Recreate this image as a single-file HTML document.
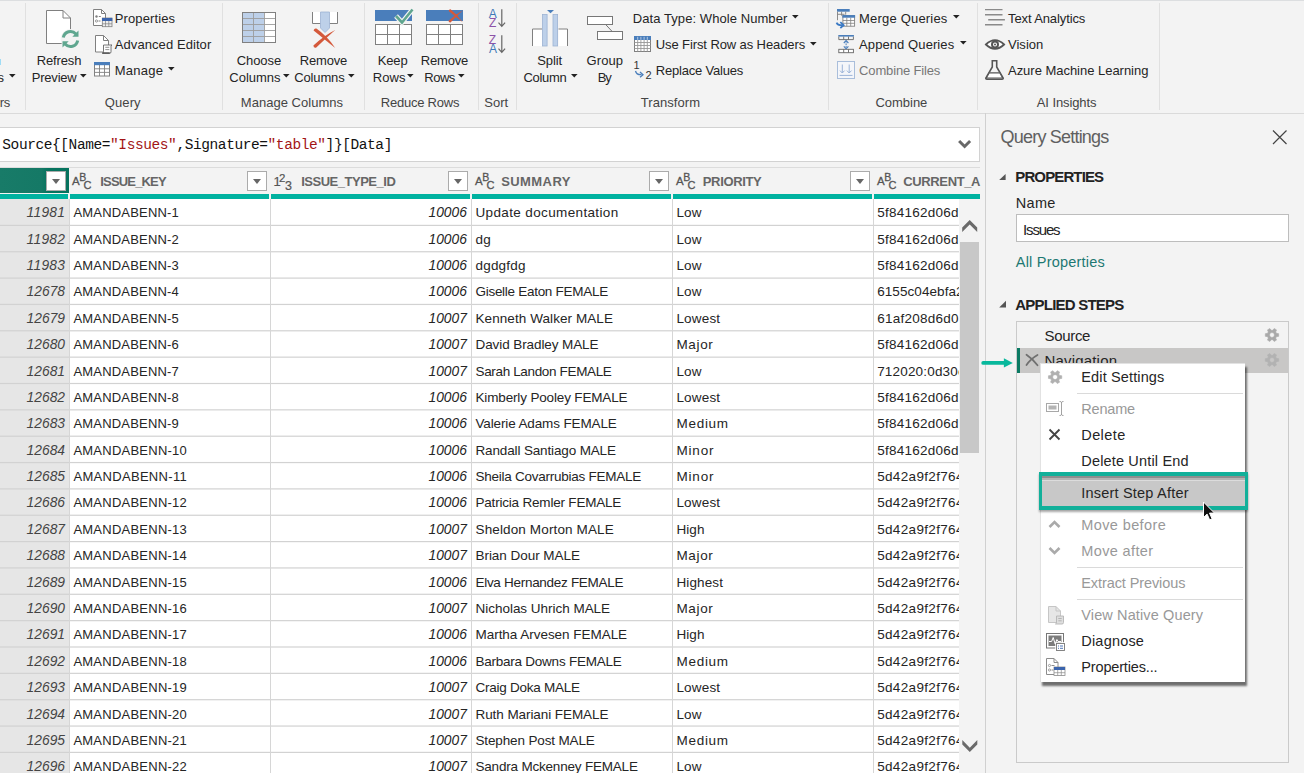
<!DOCTYPE html>
<html><head><meta charset="utf-8"><title>Power Query Editor</title>
<style>
html,body{margin:0;padding:0;}
body{width:1304px;height:773px;overflow:hidden;background:#f3f3f3;position:relative;
 font-family:"Liberation Sans",sans-serif;color:#252525;}
.a{position:absolute;}
.t{position:absolute;white-space:pre;line-height:20px;height:20px;}
.m{font-family:"Liberation Mono",monospace;}
.b{font-weight:bold;}
.i{font-style:italic;}
svg{position:absolute;overflow:visible;}
.sep{position:absolute;width:1px;background:#e0e0e0;top:3px;height:107px;}
.dd{position:absolute;width:18px;height:18px;border:1px solid #ababab;background:#fff;top:171px;}
.dd:after{content:"";position:absolute;left:5px;top:7px;border-left:4.5px solid transparent;border-right:4.5px solid transparent;border-top:5px solid #666;}
.hl{position:absolute;height:1px;background:#d6d6d6;left:0;}
.vl{position:absolute;width:1px;background:#d6d6d6;}
.msep{position:absolute;height:1px;background:#dadada;left:1077px;width:166px;}
</style></head>
<body>
<div class="a" style="left:0;top:0;width:1304px;height:1px;background:#dcdee0"></div>
<div class="a" style="left:0;top:59px;width:1px;height:6px;background:#9fdcf5"></div>
<div class="a" style="left:0;top:113px;width:1304px;height:1px;background:#dadada"></div>
<div class="sep" style="left:25px"></div>
<div class="sep" style="left:222px"></div>
<div class="sep" style="left:364px"></div>
<div class="sep" style="left:478px"></div>
<div class="sep" style="left:516px"></div>
<div class="sep" style="left:828px"></div>
<div class="sep" style="left:977px"></div>
<div class="sep" style="left:1159px"></div>
<div class="a" style="left:-2px;top:127px;width:980px;height:33px;background:#fff;border:1px solid #d2d2d2"></div>
<div class="a" style="left:985px;top:113px;width:1px;height:660px;background:#d0d0d0"></div>
<div class="a" style="left:69px;top:199px;width:890px;height:574px;background:#fff"></div>
<div class="a" style="left:0;top:199px;width:69px;height:574px;background:#e6e6e6"></div>
<div class="a" style="left:0;top:167px;width:980px;height:1px;background:#dcdcdc"></div>
<div class="a" style="left:0;top:168px;width:980px;height:26px;background:#f3f3f3"></div>
<div class="a" style="left:0;top:168px;width:69px;height:25px;background:linear-gradient(90deg,#187b68 0,#157966 60%,#06735e 70%,#06735e 100%)"></div>
<div class="a" style="left:0;top:194px;width:980px;height:5px;background:#00b2a0"></div>
<div class="vl" style="left:69px;top:168px;height:26px;width:1px;background:#f3f3f3"></div>
<div class="vl" style="left:68px;top:193px;height:6px;width:2px;background:#f3f3f3"></div>
<div class="vl" style="left:270px;top:168px;height:26px;width:1px;background:#f3f3f3"></div>
<div class="vl" style="left:269px;top:193px;height:6px;width:2px;background:#f3f3f3"></div>
<div class="vl" style="left:471px;top:168px;height:26px;width:1px;background:#f3f3f3"></div>
<div class="vl" style="left:470px;top:193px;height:6px;width:2px;background:#f3f3f3"></div>
<div class="vl" style="left:672px;top:168px;height:26px;width:1px;background:#f3f3f3"></div>
<div class="vl" style="left:671px;top:193px;height:6px;width:2px;background:#f3f3f3"></div>
<div class="vl" style="left:873px;top:168px;height:26px;width:1px;background:#f3f3f3"></div>
<div class="vl" style="left:872px;top:193px;height:6px;width:2px;background:#f3f3f3"></div>
<svg style="left:0;top:0" width="959" height="773" viewBox="0 0 959 773"><rect x="0" y="224.80" width="959" height="1.2" fill="#d2d2d2"/><rect x="0" y="251.15" width="959" height="1.2" fill="#d2d2d2"/><rect x="0" y="277.50" width="959" height="1.2" fill="#d2d2d2"/><rect x="0" y="303.85" width="959" height="1.2" fill="#d2d2d2"/><rect x="0" y="330.20" width="959" height="1.2" fill="#d2d2d2"/><rect x="0" y="356.55" width="959" height="1.2" fill="#d2d2d2"/><rect x="0" y="382.90" width="959" height="1.2" fill="#d2d2d2"/><rect x="0" y="409.25" width="959" height="1.2" fill="#d2d2d2"/><rect x="0" y="435.60" width="959" height="1.2" fill="#d2d2d2"/><rect x="0" y="461.95" width="959" height="1.2" fill="#d2d2d2"/><rect x="0" y="488.30" width="959" height="1.2" fill="#d2d2d2"/><rect x="0" y="514.65" width="959" height="1.2" fill="#d2d2d2"/><rect x="0" y="541.00" width="959" height="1.2" fill="#d2d2d2"/><rect x="0" y="567.35" width="959" height="1.2" fill="#d2d2d2"/><rect x="0" y="593.70" width="959" height="1.2" fill="#d2d2d2"/><rect x="0" y="620.05" width="959" height="1.2" fill="#d2d2d2"/><rect x="0" y="646.40" width="959" height="1.2" fill="#d2d2d2"/><rect x="0" y="672.75" width="959" height="1.2" fill="#d2d2d2"/><rect x="0" y="699.10" width="959" height="1.2" fill="#d2d2d2"/><rect x="0" y="725.45" width="959" height="1.2" fill="#d2d2d2"/><rect x="0" y="751.80" width="959" height="1.2" fill="#d2d2d2"/></svg>
<div class="vl" style="left:69px;top:199px;height:574px"></div>
<div class="vl" style="left:270px;top:199px;height:574px"></div>
<div class="vl" style="left:471px;top:199px;height:574px"></div>
<div class="vl" style="left:672px;top:199px;height:574px"></div>
<div class="vl" style="left:873px;top:199px;height:574px"></div>
<div class="dd" style="left:46px"></div>
<div class="dd" style="left:247px"></div>
<div class="dd" style="left:448px"></div>
<div class="dd" style="left:649px"></div>
<div class="dd" style="left:850px"></div>
<div class="a" style="left:960px;top:242px;width:19px;height:211px;background:#c8c8c8"></div>
<div class="a" style="left:1016px;top:214px;width:271px;height:26px;background:#fff;border:1px solid #bdbdbd"></div>
<div class="a" style="left:1016px;top:321px;width:271px;height:440px;border:1px solid #cacaca"></div>
<div class="a" style="left:1017px;top:348px;width:271px;height:25px;background:#c8c7c6"></div>
<div class="a" style="left:1017px;top:348px;width:3px;height:25px;background:#0b7a63"></div>
<svg style="left:8.8px;top:73.8px" width="7" height="4" viewBox="0 0 7 4"><path d="M0 0h6.6L3.3 3.6z" fill="#222"/></svg>
<svg style="left:79.7px;top:73.8px" width="7" height="4" viewBox="0 0 7 4"><path d="M0 0h6.6L3.3 3.6z" fill="#222"/></svg>
<svg style="left:167.7px;top:66.89999999999999px" width="7" height="4" viewBox="0 0 7 4"><path d="M0 0h6.6L3.3 3.6z" fill="#222"/></svg>
<svg style="left:282.7px;top:73.8px" width="7" height="4" viewBox="0 0 7 4"><path d="M0 0h6.6L3.3 3.6z" fill="#222"/></svg>
<svg style="left:347.7px;top:73.8px" width="7" height="4" viewBox="0 0 7 4"><path d="M0 0h6.6L3.3 3.6z" fill="#222"/></svg>
<svg style="left:407.2px;top:73.8px" width="7" height="4" viewBox="0 0 7 4"><path d="M0 0h6.6L3.3 3.6z" fill="#222"/></svg>
<svg style="left:458.4px;top:73.8px" width="7" height="4" viewBox="0 0 7 4"><path d="M0 0h6.6L3.3 3.6z" fill="#222"/></svg>
<svg style="left:570.7px;top:73.8px" width="7" height="4" viewBox="0 0 7 4"><path d="M0 0h6.6L3.3 3.6z" fill="#222"/></svg>
<svg style="left:791.7px;top:15.1px" width="7" height="4" viewBox="0 0 7 4"><path d="M0 0h6.6L3.3 3.6z" fill="#222"/></svg>
<svg style="left:810.4000000000001px;top:41.5px" width="7" height="4" viewBox="0 0 7 4"><path d="M0 0h6.6L3.3 3.6z" fill="#222"/></svg>
<svg style="left:952.7px;top:15.299999999999999px" width="7" height="4" viewBox="0 0 7 4"><path d="M0 0h6.6L3.3 3.6z" fill="#222"/></svg>
<svg style="left:959.7px;top:41.4px" width="7" height="4" viewBox="0 0 7 4"><path d="M0 0h6.6L3.3 3.6z" fill="#222"/></svg>
<svg style="left:46px;top:10px" width="36" height="40" viewBox="0 0 36 40"><path d="M0.5 0.5h16.5l7.5 7.5v25.5h-24z" fill="#fff" stroke="#808080"/><path d="M17 0.5v7.5h7.5" fill="none" stroke="#808080"/><circle cx="24.5" cy="29" r="10" fill="#f3f3f3"/><path d="M17.3 27.5a7.3 7.3 0 0 1 12.6-3.6" fill="none" stroke="#5fa68f" stroke-width="3"/><path d="M32.5 20.5v6.2h-6.2z" fill="#5fa68f"/><path d="M31.7 30.5a7.3 7.3 0 0 1-12.6 3.6" fill="none" stroke="#5fa68f" stroke-width="3"/><path d="M16.5 37.5v-6.2h6.2z" fill="#5fa68f"/></svg>
<svg style="left:93px;top:9px" width="20" height="18" viewBox="0 0 20 18"><path d="M0.5 0.5h8l4 4v12h-12z" fill="#fff" stroke="#808080"/><path d="M8.5 0.5v4h4" fill="none" stroke="#808080"/><circle cx="3.5" cy="7.5" r="1.2" fill="#808080"/><path d="M5.8 7.5h2" stroke="#808080"/><circle cx="3.5" cy="12" r="1.1" fill="none" stroke="#808080" stroke-width="0.8"/><path d="M5.5 12h2" stroke="#808080"/><rect x="9.3" y="9" width="9.7" height="8.7" fill="#eee" stroke="#808080" stroke-width="0.8"/><rect x="9" y="9" width="10.3" height="3" fill="#3b64ad"/><path d="M9.3 14.8h9.7M12.5 12v5.7M15.8 12v5.7" stroke="#808080" stroke-width="0.7"/></svg>
<svg style="left:95px;top:35px" width="18" height="19" viewBox="0 0 18 19"><path d="M0.5 0.5h8l5 5v11.5h-13z" fill="#fff" stroke="#808080"/><path d="M8.5 0.5v5h5" fill="none" stroke="#808080"/><path d="M8.5 10h8.5l-1 0.8v6q0 1.6-1.5 1.6h-7q1-0.4 1-1.8z" fill="#fff" stroke="#666" stroke-width="0.9"/><path d="M7.3 18h7.5" stroke="#555" stroke-width="1.5"/><path d="M10.3 12.3h4M10.3 14.6h4" stroke="#777" stroke-width="0.8"/></svg>
<svg style="left:94px;top:62px" width="16" height="15" viewBox="0 0 16 15"><rect x="0.5" y="0.5" width="15" height="13.5" fill="#fff" stroke="#808080"/><rect x="0" y="0" width="16" height="3.2" fill="#4a7ebb"/><path d="M0.5 6.8h15M0.5 10.4h15M5.5 3v11M10.5 3v11" stroke="#808080" stroke-width="0.9"/></svg>
<svg style="left:242px;top:12px" width="34" height="31" viewBox="0 0 34 31"><rect x="0.5" y="0.5" width="33" height="30" fill="#fff" stroke="#808080"/><rect x="1" y="1" width="21" height="29" fill="#bdd0e9"/><path d="M0.5 6.5h33" stroke="#9c9c9c" stroke-width="0.9"/><path d="M0.5 12.5h33" stroke="#9c9c9c" stroke-width="0.9"/><path d="M0.5 18.5h33" stroke="#9c9c9c" stroke-width="0.9"/><path d="M0.5 24.5h33" stroke="#9c9c9c" stroke-width="0.9"/><path d="M11.5 0.5v30" stroke="#9c9c9c" stroke-width="0.9"/><path d="M22.5 0.5v30" stroke="#9c9c9c" stroke-width="0.9"/><rect x="0.5" y="0.5" width="33" height="30" fill="none" stroke="#808080"/></svg>
<svg style="left:312px;top:12px" width="26" height="36" viewBox="0 0 26 36"><path d="M0.5 0v11.5h8.5v-11.5M25.5 0v11.5h-8v-11.5" fill="#fff" stroke="none"/><path d="M0.5 0v11.5h8M25.5 0v11.5h-8" fill="none" stroke="#808080"/><path d="M8.5 0h9v16l-4.5 4.5l-4.5-4.5z" fill="#bdd0e9" stroke="#9db3d3" stroke-width="0.8"/><path d="M1.6 18.6Q2.2 16 4.4 16.6Q15 24 23.2 35.9Q12.5 27.5 1.6 18.6z" fill="#d4593b"/><path d="M1.4 33.4Q12 23.5 23.2 17.9Q14 26 4 35.8Q1.5 36.2 1.4 33.4z" fill="#d4593b"/></svg>
<svg style="left:375px;top:10px" width="37" height="35" viewBox="0 0 37 35"><rect x="0" y="0" width="37" height="11" fill="#4a7ebb"/><rect x="0.5" y="14.5" width="36" height="20" fill="#fff" stroke="#808080"/><path d="M0.5 24.5h36M12.5 14.5v20M24.5 14.5v20" stroke="#808080"/><path d="M21 6l6 6.5L37.5 -0.5" fill="none" stroke="#f3f3f3" stroke-width="5"/><path d="M21 6l6 6.5L37.5 -0.5" fill="none" stroke="#5fa68f" stroke-width="2.6"/></svg>
<svg style="left:426px;top:10px" width="37" height="35" viewBox="0 0 37 35"><rect x="0" y="0" width="37" height="11" fill="#4a7ebb"/><rect x="0.5" y="14.5" width="36" height="20" fill="#fff" stroke="#808080"/><path d="M0.5 24.5h36M12.5 14.5v20M24.5 14.5v20" stroke="#808080"/><path d="M22.6 1Q23 -1 24.8 -0.6Q31.5 4.5 37 12.5Q30 7 22.6 1z" fill="#d4593b"/><path d="M22.5 10.8Q29.5 4.5 36.8 0.3Q31 6 24.5 12.6Q22.6 12.8 22.5 10.8z" fill="#d4593b"/></svg>
<svg style="left:488.8px;top:9px" width="18" height="19" viewBox="0 0 18 19"><text x="-0.3" y="8.7" font-family="Liberation Sans,sans-serif" font-size="12" fill="#3f79b8">A</text><text x="0" y="18.3" font-family="Liberation Sans,sans-serif" font-size="12" fill="#8c52a8">Z</text><path d="M12.8 0.2v17M9.5 13.7l3.3 3.6l3.3-3.6" fill="none" stroke="#666" stroke-width="1.2"/></svg>
<svg style="left:488.8px;top:35px" width="18" height="19" viewBox="0 0 18 19"><text x="-0.3" y="8.7" font-family="Liberation Sans,sans-serif" font-size="12" fill="#8c52a8">Z</text><text x="0" y="18.3" font-family="Liberation Sans,sans-serif" font-size="12" fill="#3f79b8">A</text><path d="M12.8 0.2v17M9.5 13.7l3.3 3.6l3.3-3.6" fill="none" stroke="#666" stroke-width="1.2"/></svg>
<svg style="left:532px;top:10px" width="37" height="36" viewBox="0 0 37 36"><path d="M0.5 36v-17h9.5v17M35.5 36v-17h-9v17" fill="#fff" stroke="none"/><path d="M0.5 36v-17h9.5M35.5 36v-17h-9" fill="none" stroke="#808080"/><rect x="10.5" y="4.5" width="4.6" height="31.5" fill="#bdd0e9" stroke="#9db3d3" stroke-width="0.8"/><rect x="21" y="4.5" width="4.6" height="31.5" fill="#bdd0e9" stroke="#9db3d3" stroke-width="0.8"/><path d="M15 0h7l-3.5 3.2z" fill="#4a7ebb"/></svg>
<svg style="left:586px;top:16px" width="37" height="25" viewBox="0 0 37 25"><rect x="1.5" y="0.5" width="25" height="8" fill="#fff" stroke="#777"/><rect x="11.5" y="15.5" width="25" height="8" fill="#fff" stroke="#777"/><path d="M19.8 8.7L26 15.3" stroke="#777" fill="none"/></svg>
<svg style="left:634px;top:36px" width="17" height="16" viewBox="0 0 17 16"><rect x="0.5" y="0.5" width="16" height="15" fill="#fff" stroke="#808080"/><rect x="0" y="0" width="17" height="4" fill="#4a7ebb"/><path d="M0.5 6.5h16" stroke="#999" stroke-width="0.9"/><path d="M0.5 9.5h16" stroke="#999" stroke-width="0.9"/><path d="M0.5 12.5h16" stroke="#999" stroke-width="0.9"/><path d="M3.7 4v11.5" stroke="#999" stroke-width="0.9"/><path d="M3.7 0.8v3" stroke="#dfe8f5" stroke-width="0.7"/><path d="M6.9 4v11.5" stroke="#999" stroke-width="0.9"/><path d="M6.9 0.8v3" stroke="#dfe8f5" stroke-width="0.7"/><path d="M10.1 4v11.5" stroke="#999" stroke-width="0.9"/><path d="M10.1 0.8v3" stroke="#dfe8f5" stroke-width="0.7"/><path d="M13.3 4v11.5" stroke="#999" stroke-width="0.9"/><path d="M13.3 0.8v3" stroke="#dfe8f5" stroke-width="0.7"/></svg>
<svg style="left:633px;top:60px" width="20" height="20" viewBox="0 0 20 20"><text x="0.5" y="9" font-family="Liberation Sans,sans-serif" font-size="11" fill="#333">1</text><text x="12.5" y="18.5" font-family="Liberation Sans,sans-serif" font-size="11" fill="#333">2</text><path d="M2.5 11q1 4 6 3.7" fill="none" stroke="#4a7ebb" stroke-width="1.3"/><path d="M7 12l3 2.7l-3 2.5" fill="none" stroke="#4a7ebb" stroke-width="1.3"/></svg>
<svg style="left:836px;top:9px" width="20" height="19" viewBox="0 0 20 19"><rect x="1" y="0" width="12.7" height="2.7" fill="#4a7ebb"/><path d="M1.5 2.7v8.5M5.6 2.7v4M9.7 2.7v3M1.5 5.3h7" stroke="#808080" stroke-width="0.9" fill="none"/><rect x="6.9" y="6.6" width="11.7" height="10.6" fill="#fff" stroke="#808080" stroke-width="0.9"/><rect x="6.4" y="6.1" width="12.7" height="2.6" fill="#4a7ebb"/><path d="M6.9 11.5h11.7M6.9 14.3h11.7M10.8 8.7v8.5M14.7 8.7v8.5" stroke="#808080" stroke-width="0.8"/><path d="M0.6 13.6q1 2.8 6 2.6" fill="none" stroke="#3a79c4" stroke-width="1.8"/><path d="M4.3 13.2l3.4 3l-3.4 2.8" fill="none" stroke="#3a79c4" stroke-width="1.7"/></svg>
<svg style="left:837.8px;top:35px" width="18" height="19" viewBox="0 0 18 19"><rect x="0.3" y="0" width="15.6" height="1.6" fill="#4a7ebb"/><path d="M0.8 1.6v3h14.6v-3M5.7 1.6v3M10.5 1.6v3" stroke="#666" stroke-width="0.9" fill="none"/><rect x="0.8" y="14.3" width="14.6" height="3.4" fill="#fff" stroke="#666" stroke-width="0.9"/><path d="M5.7 14.3v3.4M10.5 14.3v3.4" stroke="#666" stroke-width="0.9"/><path d="M8.1 6v7.3" stroke="#4a7ebb" stroke-width="1" stroke-dasharray="1.6 0.8" fill="none"/><path d="M5.8 8l2.3-2.4l2.3 2.4M5.8 11.3l2.3 2.4l2.3-2.4" stroke="#4a7ebb" stroke-width="1.1" fill="none"/></svg>
<svg style="left:837px;top:61px" width="18" height="18" viewBox="0 0 18 18"><rect x="0.5" y="0.5" width="17" height="17" fill="#f4f6fa" stroke="#a9bedb"/><path d="M5.3 3.5v8.5M3 9.6l2.3 2.4l2.3-2.4M12.2 3.5v8.5M9.9 9.6l2.3 2.4l2.3-2.4M2.5 14.4h13" stroke="#9cb4d8" stroke-width="1" fill="none"/></svg>
<svg style="left:985px;top:9px" width="20" height="16" viewBox="0 0 20 16"><path d="M0 0.6h17.5M0 5.8h17.5M3.2 10.8h16.7M0 15.8h17.5" stroke="#8a8a8a" stroke-width="1.4"/></svg>
<svg style="left:985px;top:39px" width="20" height="11" viewBox="0 0 20 11"><path d="M0.9 5.5Q10 -3.2 19.1 5.5Q10 14.2 0.9 5.5z" fill="#fff" stroke="#555" stroke-width="1.8"/><circle cx="10" cy="5.5" r="3" fill="#fff" stroke="#555" stroke-width="2"/><circle cx="10" cy="5.5" r="1" fill="#555"/></svg>
<svg style="left:985px;top:60px" width="19" height="20" viewBox="0 0 19 20"><path d="M6.5 0.7h6M7.3 0.7v6.3l-6.3 10.8q-0.6 1.5 1 1.5h15q1.6 0 1-1.5l-6.3-10.8v-6.3" fill="none" stroke="#555" stroke-width="1.6"/><path d="M4.3 12.8h10.4l3 5.2h-16.4z" fill="#fff" stroke="#555" stroke-width="1.2"/></svg>
<svg style="left:72px;top:171px" width="22" height="20" viewBox="0 0 22 20"><text x="0" y="13.6" font-family="Liberation Sans,sans-serif" font-size="11.5" fill="#555" stroke="#555" stroke-width="0.3">A</text><text x="7.3" y="10" font-family="Liberation Sans,sans-serif" font-size="10.5" fill="#555" stroke="#555" stroke-width="0.3">B</text><text x="11.6" y="18.2" font-family="Liberation Sans,sans-serif" font-size="11" fill="#555" stroke="#555" stroke-width="0.3">C</text></svg>
<svg style="left:475px;top:171px" width="22" height="20" viewBox="0 0 22 20"><text x="0" y="13.6" font-family="Liberation Sans,sans-serif" font-size="11.5" fill="#555" stroke="#555" stroke-width="0.3">A</text><text x="7.3" y="10" font-family="Liberation Sans,sans-serif" font-size="10.5" fill="#555" stroke="#555" stroke-width="0.3">B</text><text x="11.6" y="18.2" font-family="Liberation Sans,sans-serif" font-size="11" fill="#555" stroke="#555" stroke-width="0.3">C</text></svg>
<svg style="left:676px;top:171px" width="22" height="20" viewBox="0 0 22 20"><text x="0" y="13.6" font-family="Liberation Sans,sans-serif" font-size="11.5" fill="#555" stroke="#555" stroke-width="0.3">A</text><text x="7.3" y="10" font-family="Liberation Sans,sans-serif" font-size="10.5" fill="#555" stroke="#555" stroke-width="0.3">B</text><text x="11.6" y="18.2" font-family="Liberation Sans,sans-serif" font-size="11" fill="#555" stroke="#555" stroke-width="0.3">C</text></svg>
<svg style="left:877px;top:171px" width="22" height="20" viewBox="0 0 22 20"><text x="0" y="13.6" font-family="Liberation Sans,sans-serif" font-size="11.5" fill="#555" stroke="#555" stroke-width="0.3">A</text><text x="7.3" y="10" font-family="Liberation Sans,sans-serif" font-size="10.5" fill="#555" stroke="#555" stroke-width="0.3">B</text><text x="11.6" y="18.2" font-family="Liberation Sans,sans-serif" font-size="11" fill="#555" stroke="#555" stroke-width="0.3">C</text></svg>
<svg style="left:274px;top:171px" width="22" height="20" viewBox="0 0 22 20"><text x="-0.5" y="15.3" font-family="Liberation Sans,sans-serif" font-size="13" fill="#555" stroke="#555" stroke-width="0.2">1</text><text x="5" y="11" font-family="Liberation Sans,sans-serif" font-size="11.5" fill="#555" stroke="#555" stroke-width="0.2">2</text><text x="11" y="18.8" font-family="Liberation Sans,sans-serif" font-size="12.5" fill="#555" stroke="#555" stroke-width="0.2">3</text></svg>
<svg style="left:0;top:0" width="1304" height="773" viewBox="0 0 1304 773"><path d="M959.1 141L964.6 146.5L970.1 141" fill="none" stroke="#686868" stroke-width="3"/><path d="M969.70 220.00L977.20 227.60L977.20 232.00L969.70 224.40L962.20 232.00L962.20 227.60z" fill="#6a6a6a"/><path d="M969.80 752.10L977.30 744.50L977.30 740.10L969.80 747.70L962.30 740.10L962.30 744.50z" fill="#6a6a6a"/><path d="M1273 130.5l13.5 13.5M1286.5 130.5l-13.5 13.5" stroke="#444" stroke-width="1.2" fill="none"/><path d="M1005.6 174v6h-6.4z" fill="#555"/><path d="M1006 300.8v6.6h-6.8z" fill="#555"/><path d="M1278.66 333.65L1278.66 336.35L1276.45 336.68L1275.68 338.02L1276.50 340.10L1274.16 341.45L1272.78 339.70L1271.22 339.70L1269.84 341.45L1267.50 340.10L1268.32 338.02L1267.55 336.68L1265.34 336.35L1265.34 333.65L1267.55 333.32L1268.32 331.98L1267.50 329.90L1269.84 328.55L1271.22 330.30L1272.78 330.30L1274.16 328.55L1276.50 329.90L1275.68 331.98L1276.45 333.32zM1274.45 335.00a2.45 2.45 0 1 0 -4.90 0a2.45 2.45 0 1 0 4.90 0z" fill="#a9a9a9" fill-rule="evenodd" stroke="#a9a9a9" stroke-width="0.6" stroke-linejoin="round"/><path d="M1278.66 358.65L1278.66 361.35L1276.45 361.68L1275.68 363.02L1276.50 365.10L1274.16 366.45L1272.78 364.70L1271.22 364.70L1269.84 366.45L1267.50 365.10L1268.32 363.02L1267.55 361.68L1265.34 361.35L1265.34 358.65L1267.55 358.32L1268.32 356.98L1267.50 354.90L1269.84 353.55L1271.22 355.30L1272.78 355.30L1274.16 353.55L1276.50 354.90L1275.68 356.98L1276.45 358.32zM1274.45 360.00a2.45 2.45 0 1 0 -4.90 0a2.45 2.45 0 1 0 4.90 0z" fill="#b2b2b2" fill-rule="evenodd" stroke="#b2b2b2" stroke-width="0.6" stroke-linejoin="round"/><path d="M1026.5 354.8q6 4 11 10.5M1037.5 355q-7 4-11 10" stroke="#707070" stroke-width="1.8" fill="none" stroke-linecap="round"/><path d="M983.2 362.9H1005" stroke="#08b89c" stroke-width="3.8" stroke-linecap="round" fill="none"/><path d="M1003.9 358.3L1012.8 362.9L1003.9 367.4z" fill="#08b89c"/></svg>
<span class="t m" style="left:2.3px;top:135px;font-size:14.5px;letter-spacing:-0.412px;color:#111">Source{[Name=<span style="color:#a31515">"Issues"</span>,Signature=<span style="color:#a31515">"table"</span>]}[Data]</span>
<span id="t0" class="t" style="left:-2.4px;top:68.0px;font-size:13px;letter-spacing:0.700px;">s</span>
<span id="t1" class="t" style="left:-0.2px;top:93.0px;font-size:13px;color:#444;letter-spacing:-0.362px;">rs</span>
<span id="t2" class="t" style="left:36.8px;top:51.0px;font-size:13px;letter-spacing:-0.159px;">Refresh</span>
<span id="t3" class="t" style="left:31.8px;top:68.0px;font-size:13px;letter-spacing:-0.223px;">Preview</span>
<span id="t4" class="t" style="left:114.8px;top:9.0px;font-size:13px;letter-spacing:0.111px;">Properties</span>
<span id="t5" class="t" style="left:114.8px;top:35.0px;font-size:13px;letter-spacing:0.075px;">Advanced Editor</span>
<span id="t6" class="t" style="left:114.8px;top:61.0px;font-size:13px;letter-spacing:0.239px;">Manage</span>
<span id="t7" class="t" style="left:104.8px;top:93.0px;font-size:13px;color:#444;letter-spacing:0.087px;">Query</span>
<span id="t8" class="t" style="left:236.8px;top:51.0px;font-size:13px;letter-spacing:-0.093px;">Choose</span>
<span id="t9" class="t" style="left:229.3px;top:68.0px;font-size:13px;letter-spacing:0.000px;">Columns</span>
<span id="t10" class="t" style="left:299.8px;top:51.0px;font-size:13px;letter-spacing:-0.204px;">Remove</span>
<span id="t11" class="t" style="left:294.3px;top:68.0px;font-size:13px;letter-spacing:-0.153px;">Columns</span>
<span id="t12" class="t" style="left:240.8px;top:93.0px;font-size:13px;color:#444;letter-spacing:0.030px;">Manage Columns</span>
<span id="t13" class="t" style="left:377.8px;top:51.0px;font-size:13px;letter-spacing:-0.164px;">Keep</span>
<span id="t14" class="t" style="left:372.8px;top:68.0px;font-size:13px;letter-spacing:0.081px;">Rows</span>
<span id="t15" class="t" style="left:420.8px;top:51.0px;font-size:13px;letter-spacing:-0.204px;">Remove</span>
<span id="t16" class="t" style="left:424.3px;top:68.0px;font-size:13px;letter-spacing:-0.490px;">Rows</span>
<span id="t17" class="t" style="left:380.8px;top:93.0px;font-size:13px;color:#444;letter-spacing:-0.232px;">Reduce Rows</span>
<span id="t18" class="t" style="left:484.3px;top:93.0px;font-size:13px;color:#444;letter-spacing:-0.012px;">Sort</span>
<span id="t19" class="t" style="left:537.3px;top:51.0px;font-size:13px;letter-spacing:-0.110px;">Split</span>
<span id="t20" class="t" style="left:523.5px;top:68.0px;font-size:13px;letter-spacing:-0.309px;">Column</span>
<span id="t21" class="t" style="left:586.5px;top:51.0px;font-size:13px;letter-spacing:0.102px;">Group</span>
<span id="t22" class="t" style="left:597.8px;top:68.0px;font-size:13px;letter-spacing:-1.248px;">By</span>
<span id="t23" class="t" style="left:632.8px;top:9.0px;font-size:13px;letter-spacing:0.069px;">Data Type: Whole Number</span>
<span id="t24" class="t" style="left:655.8px;top:35.0px;font-size:13px;letter-spacing:-0.103px;">Use First Row as Headers</span>
<span id="t25" class="t" style="left:655.8px;top:61.0px;font-size:13px;letter-spacing:-0.207px;">Replace Values</span>
<span id="t26" class="t" style="left:640.8px;top:93.0px;font-size:13px;color:#444;letter-spacing:0.065px;">Transform</span>
<span id="t27" class="t" style="left:859.1px;top:9.0px;font-size:13px;letter-spacing:0.185px;">Merge Queries</span>
<span id="t28" class="t" style="left:859.1px;top:35.0px;font-size:13px;letter-spacing:0.085px;">Append Queries</span>
<span id="t29" class="t" style="left:859.1px;top:61.0px;font-size:13px;color:#777;letter-spacing:-0.151px;">Combine Files</span>
<span id="t30" class="t" style="left:875.5px;top:93.0px;font-size:13px;color:#444;letter-spacing:-0.036px;">Combine</span>
<span id="t31" class="t" style="left:1008.0px;top:9.0px;font-size:13px;letter-spacing:-0.109px;">Text Analytics</span>
<span id="t32" class="t" style="left:1008.0px;top:35.0px;font-size:13px;letter-spacing:0.020px;">Vision</span>
<span id="t33" class="t" style="left:1008.0px;top:61.0px;font-size:13px;letter-spacing:-0.024px;">Azure Machine Learning</span>
<span id="t34" class="t" style="left:1036.8px;top:93.0px;font-size:13px;color:#444;letter-spacing:-0.105px;">AI Insights</span>
<span id="t35" class="t b" style="left:100.3px;top:172.0px;font-size:13px;color:#666;letter-spacing:-0.833px;">ISSUE_KEY</span>
<span id="t36" class="t b" style="left:301.2px;top:172.0px;font-size:13px;color:#666;letter-spacing:-0.483px;">ISSUE_TYPE_ID</span>
<span id="t37" class="t b" style="left:501.2px;top:172.0px;font-size:13px;color:#666;letter-spacing:0.417px;">SUMMARY</span>
<span id="t38" class="t b" style="left:702.8px;top:172.0px;font-size:13px;color:#666;letter-spacing:-0.348px;">PRIORITY</span>
<span id="t39" class="t b" style="left:903.3px;top:172.0px;font-size:13px;color:#666;letter-spacing:-0.373px;">CURRENT_A</span>
<span id="t40" class="t i" style="left:26.6px;top:203.0px;font-size:13.8px;color:#444;letter-spacing:0.235px;">11981</span>
<span id="t41" class="t" style="left:73.4px;top:203.0px;font-size:13px;letter-spacing:0.192px;">AMANDABENN-1</span>
<span id="t42" class="t i" style="left:428.5px;top:203.0px;font-size:13.8px;letter-spacing:0.006px;">10006</span>
<span id="t43" class="t" style="left:475.5px;top:203.0px;font-size:13.5px;letter-spacing:0.362px;">Update documentation</span>
<span id="t44" class="t" style="left:676.4px;top:203.0px;font-size:13.5px;letter-spacing:0.174px;">Low</span>
<span id="t46" class="t i" style="left:26.6px;top:230.0px;font-size:13.8px;color:#444;letter-spacing:0.235px;">11982</span>
<span id="t47" class="t" style="left:73.4px;top:230.0px;font-size:13px;letter-spacing:0.192px;">AMANDABENN-2</span>
<span id="t48" class="t i" style="left:428.5px;top:230.0px;font-size:13.8px;letter-spacing:0.006px;">10006</span>
<span id="t49" class="t" style="left:475.5px;top:230.0px;font-size:13.5px;letter-spacing:0.179px;">dg</span>
<span id="t50" class="t" style="left:676.4px;top:230.0px;font-size:13.5px;letter-spacing:0.174px;">Low</span>
<span id="t52" class="t i" style="left:26.6px;top:256.0px;font-size:13.8px;color:#444;letter-spacing:0.235px;">11983</span>
<span id="t53" class="t" style="left:73.4px;top:256.0px;font-size:13px;letter-spacing:0.192px;">AMANDABENN-3</span>
<span id="t54" class="t i" style="left:428.5px;top:256.0px;font-size:13.8px;letter-spacing:0.006px;">10006</span>
<span id="t55" class="t" style="left:475.5px;top:256.0px;font-size:13.5px;letter-spacing:0.198px;">dgdgfdg</span>
<span id="t56" class="t" style="left:676.4px;top:256.0px;font-size:13.5px;letter-spacing:0.174px;">Low</span>
<span id="t58" class="t i" style="left:26.6px;top:282.0px;font-size:13.8px;color:#444;letter-spacing:0.006px;">12678</span>
<span id="t59" class="t" style="left:73.4px;top:282.0px;font-size:13px;letter-spacing:0.192px;">AMANDABENN-4</span>
<span id="t60" class="t i" style="left:428.5px;top:282.0px;font-size:13.8px;letter-spacing:0.006px;">10006</span>
<span id="t61" class="t" style="left:475.5px;top:282.0px;font-size:13.5px;letter-spacing:-0.285px;">Giselle Eaton FEMALE</span>
<span id="t62" class="t" style="left:676.4px;top:282.0px;font-size:13.5px;letter-spacing:0.174px;">Low</span>
<span id="t64" class="t i" style="left:26.6px;top:309.0px;font-size:13.8px;color:#444;letter-spacing:0.006px;">12679</span>
<span id="t65" class="t" style="left:73.4px;top:309.0px;font-size:13px;letter-spacing:0.192px;">AMANDABENN-5</span>
<span id="t66" class="t i" style="left:428.5px;top:309.0px;font-size:13.8px;letter-spacing:0.006px;">10007</span>
<span id="t67" class="t" style="left:475.5px;top:309.0px;font-size:13.5px;letter-spacing:0.078px;">Kenneth Walker MALE</span>
<span id="t68" class="t" style="left:676.4px;top:309.0px;font-size:13.5px;letter-spacing:0.185px;">Lowest</span>
<span id="t70" class="t i" style="left:26.6px;top:335.0px;font-size:13.8px;color:#444;letter-spacing:0.006px;">12680</span>
<span id="t71" class="t" style="left:73.4px;top:335.0px;font-size:13px;letter-spacing:0.192px;">AMANDABENN-6</span>
<span id="t72" class="t i" style="left:428.5px;top:335.0px;font-size:13.8px;letter-spacing:0.006px;">10007</span>
<span id="t73" class="t" style="left:475.5px;top:335.0px;font-size:13.5px;letter-spacing:-0.089px;">David Bradley MALE</span>
<span id="t74" class="t" style="left:676.4px;top:335.0px;font-size:13.5px;letter-spacing:0.674px;">Major</span>
<span id="t76" class="t i" style="left:26.6px;top:362.0px;font-size:13.8px;color:#444;letter-spacing:0.006px;">12681</span>
<span id="t77" class="t" style="left:73.4px;top:362.0px;font-size:13px;letter-spacing:0.192px;">AMANDABENN-7</span>
<span id="t78" class="t i" style="left:428.5px;top:362.0px;font-size:13.8px;letter-spacing:0.006px;">10007</span>
<span id="t79" class="t" style="left:475.5px;top:362.0px;font-size:13.5px;letter-spacing:-0.346px;">Sarah Landon FEMALE</span>
<span id="t80" class="t" style="left:676.4px;top:362.0px;font-size:13.5px;letter-spacing:0.174px;">Low</span>
<span id="t82" class="t i" style="left:26.6px;top:388.0px;font-size:13.8px;color:#444;letter-spacing:0.006px;">12682</span>
<span id="t83" class="t" style="left:73.4px;top:388.0px;font-size:13px;letter-spacing:0.192px;">AMANDABENN-8</span>
<span id="t84" class="t i" style="left:428.5px;top:388.0px;font-size:13.8px;letter-spacing:0.006px;">10006</span>
<span id="t85" class="t" style="left:475.5px;top:388.0px;font-size:13.5px;letter-spacing:-0.154px;">Kimberly Pooley FEMALE</span>
<span id="t86" class="t" style="left:676.4px;top:388.0px;font-size:13.5px;letter-spacing:0.185px;">Lowest</span>
<span id="t88" class="t i" style="left:26.6px;top:414.0px;font-size:13.8px;color:#444;letter-spacing:0.006px;">12683</span>
<span id="t89" class="t" style="left:73.4px;top:414.0px;font-size:13px;letter-spacing:0.192px;">AMANDABENN-9</span>
<span id="t90" class="t i" style="left:428.5px;top:414.0px;font-size:13.8px;letter-spacing:0.006px;">10006</span>
<span id="t91" class="t" style="left:475.5px;top:414.0px;font-size:13.5px;letter-spacing:-0.134px;">Valerie Adams FEMALE</span>
<span id="t92" class="t" style="left:676.4px;top:414.0px;font-size:13.5px;letter-spacing:0.743px;">Medium</span>
<span id="t94" class="t i" style="left:26.6px;top:441.0px;font-size:13.8px;color:#444;letter-spacing:0.006px;">12684</span>
<span id="t95" class="t" style="left:73.4px;top:441.0px;font-size:13px;letter-spacing:0.238px;">AMANDABENN-10</span>
<span id="t96" class="t i" style="left:428.5px;top:441.0px;font-size:13.8px;letter-spacing:0.006px;">10006</span>
<span id="t97" class="t" style="left:475.5px;top:441.0px;font-size:13.5px;letter-spacing:-0.144px;">Randall Santiago MALE</span>
<span id="t98" class="t" style="left:676.4px;top:441.0px;font-size:13.5px;letter-spacing:0.852px;">Minor</span>
<span id="t100" class="t i" style="left:26.6px;top:467.0px;font-size:13.8px;color:#444;letter-spacing:0.006px;">12685</span>
<span id="t101" class="t" style="left:73.4px;top:467.0px;font-size:13px;letter-spacing:0.315px;">AMANDABENN-11</span>
<span id="t102" class="t i" style="left:428.5px;top:467.0px;font-size:13.8px;letter-spacing:0.006px;">10006</span>
<span id="t103" class="t" style="left:475.5px;top:467.0px;font-size:13.5px;letter-spacing:-0.254px;">Sheila Covarrubias FEMALE</span>
<span id="t104" class="t" style="left:676.4px;top:467.0px;font-size:13.5px;letter-spacing:0.852px;">Minor</span>
<span id="t106" class="t i" style="left:26.6px;top:493.0px;font-size:13.8px;color:#444;letter-spacing:0.006px;">12686</span>
<span id="t107" class="t" style="left:73.4px;top:493.0px;font-size:13px;letter-spacing:0.238px;">AMANDABENN-12</span>
<span id="t108" class="t i" style="left:428.5px;top:493.0px;font-size:13.8px;letter-spacing:0.006px;">10006</span>
<span id="t109" class="t" style="left:475.5px;top:493.0px;font-size:13.5px;letter-spacing:-0.198px;">Patricia Remler FEMALE</span>
<span id="t110" class="t" style="left:676.4px;top:493.0px;font-size:13.5px;letter-spacing:0.185px;">Lowest</span>
<span id="t112" class="t i" style="left:26.6px;top:520.0px;font-size:13.8px;color:#444;letter-spacing:0.006px;">12687</span>
<span id="t113" class="t" style="left:73.4px;top:520.0px;font-size:13px;letter-spacing:0.238px;">AMANDABENN-13</span>
<span id="t114" class="t i" style="left:428.5px;top:520.0px;font-size:13.8px;letter-spacing:0.006px;">10007</span>
<span id="t115" class="t" style="left:475.5px;top:520.0px;font-size:13.5px;letter-spacing:0.134px;">Sheldon Morton MALE</span>
<span id="t116" class="t" style="left:676.4px;top:520.0px;font-size:13.5px;letter-spacing:0.096px;">High</span>
<span id="t118" class="t i" style="left:26.6px;top:546.0px;font-size:13.8px;color:#444;letter-spacing:0.006px;">12688</span>
<span id="t119" class="t" style="left:73.4px;top:546.0px;font-size:13px;letter-spacing:0.238px;">AMANDABENN-14</span>
<span id="t120" class="t i" style="left:428.5px;top:546.0px;font-size:13.8px;letter-spacing:0.006px;">10007</span>
<span id="t121" class="t" style="left:475.5px;top:546.0px;font-size:13.5px;letter-spacing:-0.045px;">Brian Dour MALE</span>
<span id="t122" class="t" style="left:676.4px;top:546.0px;font-size:13.5px;letter-spacing:0.674px;">Major</span>
<span id="t124" class="t i" style="left:26.6px;top:573.0px;font-size:13.8px;color:#444;letter-spacing:0.006px;">12689</span>
<span id="t125" class="t" style="left:73.4px;top:573.0px;font-size:13px;letter-spacing:0.238px;">AMANDABENN-15</span>
<span id="t126" class="t i" style="left:428.5px;top:573.0px;font-size:13.8px;letter-spacing:0.006px;">10006</span>
<span id="t127" class="t" style="left:475.5px;top:573.0px;font-size:13.5px;letter-spacing:-0.294px;">Elva Hernandez FEMALE</span>
<span id="t128" class="t" style="left:676.4px;top:573.0px;font-size:13.5px;letter-spacing:0.141px;">Highest</span>
<span id="t130" class="t i" style="left:26.6px;top:599.0px;font-size:13.8px;color:#444;letter-spacing:0.006px;">12690</span>
<span id="t131" class="t" style="left:73.4px;top:599.0px;font-size:13px;letter-spacing:0.238px;">AMANDABENN-16</span>
<span id="t132" class="t i" style="left:428.5px;top:599.0px;font-size:13.8px;letter-spacing:0.006px;">10007</span>
<span id="t133" class="t" style="left:475.5px;top:599.0px;font-size:13.5px;letter-spacing:-0.023px;">Nicholas Uhrich MALE</span>
<span id="t134" class="t" style="left:676.4px;top:599.0px;font-size:13.5px;letter-spacing:0.674px;">Major</span>
<span id="t136" class="t i" style="left:26.6px;top:625.0px;font-size:13.8px;color:#444;letter-spacing:0.006px;">12691</span>
<span id="t137" class="t" style="left:73.4px;top:625.0px;font-size:13px;letter-spacing:0.238px;">AMANDABENN-17</span>
<span id="t138" class="t i" style="left:428.5px;top:625.0px;font-size:13.8px;letter-spacing:0.006px;">10006</span>
<span id="t139" class="t" style="left:475.5px;top:625.0px;font-size:13.5px;letter-spacing:-0.035px;">Martha Arvesen FEMALE</span>
<span id="t140" class="t" style="left:676.4px;top:625.0px;font-size:13.5px;letter-spacing:0.096px;">High</span>
<span id="t142" class="t i" style="left:26.6px;top:652.0px;font-size:13.8px;color:#444;letter-spacing:0.006px;">12692</span>
<span id="t143" class="t" style="left:73.4px;top:652.0px;font-size:13px;letter-spacing:0.238px;">AMANDABENN-18</span>
<span id="t144" class="t i" style="left:428.5px;top:652.0px;font-size:13.8px;letter-spacing:0.006px;">10006</span>
<span id="t145" class="t" style="left:475.5px;top:652.0px;font-size:13.5px;letter-spacing:-0.242px;">Barbara Downs FEMALE</span>
<span id="t146" class="t" style="left:676.4px;top:652.0px;font-size:13.5px;letter-spacing:0.743px;">Medium</span>
<span id="t148" class="t i" style="left:26.6px;top:678.0px;font-size:13.8px;color:#444;letter-spacing:0.006px;">12693</span>
<span id="t149" class="t" style="left:73.4px;top:678.0px;font-size:13px;letter-spacing:0.238px;">AMANDABENN-19</span>
<span id="t150" class="t i" style="left:428.5px;top:678.0px;font-size:13.8px;letter-spacing:0.006px;">10007</span>
<span id="t151" class="t" style="left:475.5px;top:678.0px;font-size:13.5px;letter-spacing:-0.252px;">Craig Doka MALE</span>
<span id="t152" class="t" style="left:676.4px;top:678.0px;font-size:13.5px;letter-spacing:0.185px;">Lowest</span>
<span id="t154" class="t i" style="left:26.6px;top:705.0px;font-size:13.8px;color:#444;letter-spacing:0.006px;">12694</span>
<span id="t155" class="t" style="left:73.4px;top:705.0px;font-size:13px;letter-spacing:0.238px;">AMANDABENN-20</span>
<span id="t156" class="t i" style="left:428.5px;top:705.0px;font-size:13.8px;letter-spacing:0.006px;">10007</span>
<span id="t157" class="t" style="left:475.5px;top:705.0px;font-size:13.5px;letter-spacing:-0.076px;">Ruth Mariani FEMALE</span>
<span id="t158" class="t" style="left:676.4px;top:705.0px;font-size:13.5px;letter-spacing:0.174px;">Low</span>
<span id="t160" class="t i" style="left:26.6px;top:731.0px;font-size:13.8px;color:#444;letter-spacing:0.006px;">12695</span>
<span id="t161" class="t" style="left:73.4px;top:731.0px;font-size:13px;letter-spacing:0.238px;">AMANDABENN-21</span>
<span id="t162" class="t i" style="left:428.5px;top:731.0px;font-size:13.8px;letter-spacing:0.006px;">10007</span>
<span id="t163" class="t" style="left:475.5px;top:731.0px;font-size:13.5px;letter-spacing:-0.138px;">Stephen Post MALE</span>
<span id="t164" class="t" style="left:676.4px;top:731.0px;font-size:13.5px;letter-spacing:0.743px;">Medium</span>
<span id="t166" class="t i" style="left:26.6px;top:757.0px;font-size:13.8px;color:#444;letter-spacing:0.006px;">12696</span>
<span id="t167" class="t" style="left:73.4px;top:757.0px;font-size:13px;letter-spacing:0.238px;">AMANDABENN-22</span>
<span id="t168" class="t i" style="left:428.5px;top:757.0px;font-size:13.8px;letter-spacing:0.006px;">10007</span>
<span id="t169" class="t" style="left:475.5px;top:757.0px;font-size:13.5px;letter-spacing:-0.199px;">Sandra Mckenney FEMALE</span>
<span id="t170" class="t" style="left:676.4px;top:757.0px;font-size:13.5px;letter-spacing:0.174px;">Low</span>
<span id="t172" class="t" style="left:1000.6px;top:127.0px;font-size:18px;color:#606060;letter-spacing:-0.797px;">Query Settings</span>
<span id="t173" class="t b" style="left:1015.3px;top:167.0px;font-size:15px;color:#222;letter-spacing:-0.883px;">PROPERTIES</span>
<span id="t174" class="t" style="left:1015.8px;top:193.0px;font-size:14.5px;letter-spacing:0.318px;">Name</span>
<span id="t175" class="t" style="left:1023.1px;top:220.0px;font-size:15px;letter-spacing:-1.174px;">Issues</span>
<span id="t176" class="t" style="left:1015.8px;top:252.0px;font-size:14.5px;color:#1d7872;letter-spacing:0.212px;">All Properties</span>
<span id="t177" class="t b" style="left:1015.3px;top:295.0px;font-size:15px;color:#222;letter-spacing:-0.781px;">APPLIED STEPS</span>
<span id="t178" class="t" style="left:1044.5px;top:326.0px;font-size:15px;letter-spacing:-0.315px;">Source</span>
<span id="t179" class="t" style="left:1044.5px;top:351.0px;font-size:15px;letter-spacing:0.180px;">Navigation</span>
<span id="t180" class="t" style="left:1081.3px;top:367.0px;font-size:14.5px;letter-spacing:0.134px;z-index:4;">Edit Settings</span>
<span id="t181" class="t" style="left:1081.3px;top:399.0px;font-size:14.5px;color:#999;letter-spacing:-0.184px;z-index:4;">Rename</span>
<span id="t182" class="t" style="left:1081.3px;top:425.0px;font-size:14.5px;letter-spacing:0.396px;z-index:4;">Delete</span>
<span id="t183" class="t" style="left:1081.3px;top:451.0px;font-size:14.5px;letter-spacing:0.162px;z-index:4;">Delete Until End</span>
<span id="t184" class="t" style="left:1081.3px;top:483.0px;font-size:14.5px;letter-spacing:0.201px;z-index:4;">Insert Step After</span>
<span id="t185" class="t" style="left:1081.3px;top:515.0px;font-size:14.5px;color:#999;letter-spacing:0.380px;z-index:4;">Move before</span>
<span id="t186" class="t" style="left:1081.3px;top:541.0px;font-size:14.5px;color:#999;letter-spacing:0.368px;z-index:4;">Move after</span>
<span id="t187" class="t" style="left:1081.3px;top:573.0px;font-size:14.5px;color:#999;letter-spacing:-0.095px;z-index:4;">Extract Previous</span>
<span id="t188" class="t" style="left:1081.3px;top:605.0px;font-size:14.5px;color:#999;letter-spacing:0.120px;z-index:4;">View Native Query</span>
<span id="t189" class="t" style="left:1081.3px;top:631.0px;font-size:14.5px;letter-spacing:0.191px;z-index:4;">Diagnose</span>
<span id="t190" class="t" style="left:1081.3px;top:657.0px;font-size:14.5px;letter-spacing:-0.158px;z-index:4;">Properties...</span>
<div class="a" style="left:873px;top:199px;width:86px;height:574px;overflow:hidden"><span id="t45" class="t" style="left:4.2px;top:4.0px;font-size:13.5px;letter-spacing:0.243px;">5f84162d06d</span>
<span id="t51" class="t" style="left:4.2px;top:31.0px;font-size:13.5px;letter-spacing:0.243px;">5f84162d06d</span>
<span id="t57" class="t" style="left:4.2px;top:57.0px;font-size:13.5px;letter-spacing:0.243px;">5f84162d06d</span>
<span id="t63" class="t" style="left:4.2px;top:83.0px;font-size:13.5px;letter-spacing:0.070px;">6155c04ebfa2</span>
<span id="t69" class="t" style="left:4.2px;top:110.0px;font-size:13.5px;letter-spacing:0.243px;">61af208d6d0</span>
<span id="t75" class="t" style="left:4.2px;top:136.0px;font-size:13.5px;letter-spacing:0.243px;">5f84162d06d</span>
<span id="t81" class="t" style="left:4.2px;top:163.0px;font-size:13.5px;letter-spacing:0.174px;">712020:0d30c</span>
<span id="t87" class="t" style="left:4.2px;top:189.0px;font-size:13.5px;letter-spacing:0.243px;">5f84162d06d</span>
<span id="t93" class="t" style="left:4.2px;top:215.0px;font-size:13.5px;letter-spacing:0.243px;">5f84162d06d</span>
<span id="t99" class="t" style="left:4.2px;top:242.0px;font-size:13.5px;letter-spacing:0.243px;">5f84162d06d</span>
<span id="t105" class="t" style="left:4.2px;top:268.0px;font-size:13.5px;letter-spacing:0.331px;">5d42a9f2f764</span>
<span id="t111" class="t" style="left:4.2px;top:294.0px;font-size:13.5px;letter-spacing:0.331px;">5d42a9f2f764</span>
<span id="t117" class="t" style="left:4.2px;top:321.0px;font-size:13.5px;letter-spacing:0.331px;">5d42a9f2f764</span>
<span id="t123" class="t" style="left:4.2px;top:347.0px;font-size:13.5px;letter-spacing:0.331px;">5d42a9f2f764</span>
<span id="t129" class="t" style="left:4.2px;top:374.0px;font-size:13.5px;letter-spacing:0.331px;">5d42a9f2f764</span>
<span id="t135" class="t" style="left:4.2px;top:400.0px;font-size:13.5px;letter-spacing:0.331px;">5d42a9f2f764</span>
<span id="t141" class="t" style="left:4.2px;top:426.0px;font-size:13.5px;letter-spacing:0.331px;">5d42a9f2f764</span>
<span id="t147" class="t" style="left:4.2px;top:453.0px;font-size:13.5px;letter-spacing:0.331px;">5d42a9f2f764</span>
<span id="t153" class="t" style="left:4.2px;top:479.0px;font-size:13.5px;letter-spacing:0.331px;">5d42a9f2f764</span>
<span id="t159" class="t" style="left:4.2px;top:506.0px;font-size:13.5px;letter-spacing:0.331px;">5d42a9f2f764</span>
<span id="t165" class="t" style="left:4.2px;top:532.0px;font-size:13.5px;letter-spacing:0.331px;">5d42a9f2f764</span>
<span id="t171" class="t" style="left:4.2px;top:558.0px;font-size:13.5px;letter-spacing:0.331px;">5d42a9f2f764</span></div>
<div class="a" style="left:1040px;top:363px;width:205px;height:319px;background:#fff;box-shadow:2px 3.5px 2px rgba(0,0,0,0.55);border-left:1px solid #e2e2e2;border-top:1px solid #e2e2e2;box-sizing:border-box"></div>
<div class="msep" style="top:393px"></div>
<div class="msep" style="top:567px"></div>
<div class="msep" style="top:599px"></div>
<div class="a" style="left:1039px;top:472px;width:209px;height:38px;box-sizing:border-box;border:4px solid #12b09a;border-left-width:3.5px;border-right-width:3.5px;background:linear-gradient(#8e8e8e 0,#8e8e8e 2px,#b4b4b4 2px,#b4b4b4 3.5px,#dcdcdc 3.5px,#dcdcdc 4.5px,#c8c8c8 4.5px);box-shadow:0 2px 2px rgba(0,0,0,0.35)"></div>
<svg style="left:0;top:0;z-index:5" width="1304" height="773" viewBox="0 0 1304 773"><path d="M1061.76 375.75L1061.76 378.45L1059.55 378.78L1058.78 380.12L1059.60 382.20L1057.26 383.55L1055.88 381.80L1054.32 381.80L1052.94 383.55L1050.60 382.20L1051.42 380.12L1050.65 378.78L1048.44 378.45L1048.44 375.75L1050.65 375.42L1051.42 374.08L1050.60 372.00L1052.94 370.65L1054.32 372.40L1055.88 372.40L1057.26 370.65L1059.60 372.00L1058.78 374.08L1059.55 375.42zM1057.55 377.10a2.45 2.45 0 1 0 -4.90 0a2.45 2.45 0 1 0 4.90 0z" fill="#b0b0b0" fill-rule="evenodd" stroke="#b0b0b0" stroke-width="0.6" stroke-linejoin="round"/><rect x="1046.5" y="403.5" width="12" height="8" fill="#fff" stroke="#a8a8a8"/><rect x="1048.5" y="405.5" width="8" height="4" fill="#b4b4b4"/><path d="M1061.5 402v13M1059.5 401.5q2 0 2 1q0-1 2-1M1059.5 415.5q2 0 2-1q0 1 2 1" stroke="#999" stroke-width="0.9" fill="none"/><path d="M1049.5 429.5l10 10M1059.5 429.5l-10 10" stroke="#444" stroke-width="1.8" fill="none"/><path d="M1049.5 527.0L1054.5 522.0L1059.5 527.0" fill="none" stroke="#aaa" stroke-width="2.6"/><path d="M1049.5 548.0L1054.5 553.0L1059.5 548.0" fill="none" stroke="#aaa" stroke-width="2.6"/><path d="M1048.5 606.5h7.5l4.5 4.5v11.5h-12z" fill="#e6e6e6" stroke="#c6c6c6"/><path d="M1056 606.5v4.5h4.5" fill="none" stroke="#c6c6c6"/><path d="M1056.5 616h7v6.5q0 1.5-1.5 1.5h-6.5q1-0.4 1-1.8z" fill="#dedede" stroke="#b4b4b4" stroke-width="0.9"/><path d="M1058.3 618.5h3.4M1058.3 620.8h3.4" stroke="#aaa" stroke-width="0.8"/><rect x="1046.5" y="633.5" width="17" height="14.5" fill="#fff" stroke="#777"/><rect x="1048.5" y="635.5" width="13" height="10.5" fill="#7c7c7c"/><path d="M1049 641.5h2.6l1.6-4l2 6.5l1.7-4.5l1.1 2h3" stroke="#fff" stroke-width="1" fill="none"/><rect x="1056" y="643" width="9.5" height="8" fill="#fff" stroke="#fff" stroke-width="1.6"/><rect x="1056.5" y="643.5" width="8" height="7" fill="#fff" stroke="#777" stroke-width="0.9"/><path d="M1058 646h1M1060 646h3M1058 648.3h1M1060 648.3h3" stroke="#3b64ad" stroke-width="0.9"/><path d="M1046.5 658.5h7.5l4 4v12h-11.5z" fill="#fff" stroke="#8c8c8c"/><path d="M1054 658.5v4h4" fill="none" stroke="#8c8c8c"/><circle cx="1049.5" cy="665.5" r="1.1" fill="none" stroke="#8c8c8c" stroke-width="0.8"/><path d="M1051.5 665.5h3" stroke="#8c8c8c"/><circle cx="1049.5" cy="670" r="1.1" fill="none" stroke="#8c8c8c" stroke-width="0.8"/><path d="M1051.5 670h2" stroke="#8c8c8c"/><rect x="1054" y="667" width="11" height="8.5" fill="#fff" stroke="#8c8c8c" stroke-width="0.8"/><rect x="1054" y="667" width="11" height="3" fill="#3b64ad"/><path d="M1054 672.7h11M1057.7 670v5.5M1061.3 670v5.5" stroke="#8c8c8c" stroke-width="0.7"/><path d="M1203.5 502v15.5l3.6-3.4l2.6 5.8l2.4-1.1l-2.6-5.7h5z" fill="#111" stroke="#fff" stroke-width="1"/></svg>
</body></html>
